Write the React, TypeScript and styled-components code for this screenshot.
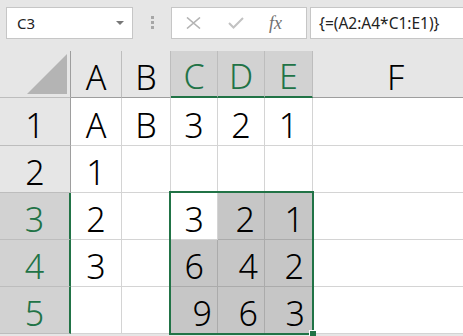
import React from 'react';
import styled, { createGlobalStyle } from 'styled-components';

const GREEN = '#217346';

const GlobalStyle = createGlobalStyle`
  html, body {
    margin: 0;
    padding: 0;
    background: #e6e6e6;
    overflow: hidden;
  }
`;

const Page = styled.div`
  width: 463px;
  height: 336px;
  overflow: hidden;
  background: #e6e6e6;
  font-family: 'Noto Sans', 'Liberation Sans', sans-serif;
`;

const FormulaBar = styled.div`
  display: flex;
  align-items: flex-start;
  height: 51px;
  box-sizing: border-box;
  padding: 7px 0 0 6px;
`;

const NameBox = styled.div`
  width: 127px;
  height: 32px;
  box-sizing: border-box;
  background: #fff;
  border: 1px solid #c6c6c6;
  display: flex;
  align-items: center;
  padding-left: 10px;
  font-size: 15px;
  color: #222;
`;

const Caret = styled.span`
  margin-left: auto;
  margin-right: 8px;
  width: 0;
  height: 0;
  border-left: 4px solid transparent;
  border-right: 4px solid transparent;
  border-top: 4px solid #777;
`;

const Grip = styled.div`
  display: flex;
  flex-direction: column;
  gap: 2px;
  margin: 9px 17px 0 18px;
  span {
    width: 3px;
    height: 3px;
    background: #a6a6a6;
  }
`;

const ButtonBox = styled.div`
  width: 136px;
  height: 32px;
  box-sizing: border-box;
  background: #fff;
  border: 1px solid #c6c6c6;
  display: flex;
  align-items: center;
  padding-left: 14px;
  gap: 27px;
`;

const Fx = styled.span`
  font-family: 'Liberation Serif', serif;
  font-style: italic;
  font-size: 18px;
  color: #707070;
  margin-left: -2px;
`;

const FormulaInput = styled.div`
  flex: 1;
  height: 32px;
  margin-left: 3px;
  box-sizing: border-box;
  background: #fff;
  border: 1px solid #c6c6c6;
  border-right: none;
  display: flex;
  align-items: center;
  padding-left: 8px;
  font-size: 15.5px;
  color: #222;
  white-space: nowrap;
`;

const Sheet = styled.div`
  position: relative;
  display: grid;
  grid-template-columns: 71px 51px 49px 47px 47px 48px 166px;
  grid-template-rows: 47px 48px 47px 47px 47px 47px;
  font-size: 34px;
  font-weight: 300;
  background: #fff;
`;

const Corner = styled.div`
  background: #e6e6e6;
  border-right: 1px solid #9e9e9e;
  border-bottom: 1px solid #bdbdbd;
  display: flex;
  align-items: flex-end;
  justify-content: flex-end;
  padding: 0 3px 3px 0;
`;

const ColHead = styled.div<{ $active?: boolean }>`
  background: ${(p) => (p.$active ? '#d2d2d2' : '#e6e6e6')};
  color: ${(p) => (p.$active ? GREEN : '#000')};
  border-right: 1px solid #bdbdbd;
  border-bottom: ${(p) => (p.$active ? `2px solid ${GREEN}` : '1px solid #9e9e9e')};
  display: flex;
  align-items: center;
  justify-content: center;
  padding-top: 5px;
  box-sizing: border-box;
`;

const RowHead = styled.div<{ $active?: boolean }>`
  background: ${(p) => (p.$active ? '#d2d2d2' : '#e6e6e6')};
  color: ${(p) => (p.$active ? GREEN : '#000')};
  border-right: ${(p) => (p.$active ? `2px solid ${GREEN}` : '1px solid #9e9e9e')};
  border-bottom: 1px solid #bdbdbd;
  display: flex;
  align-items: center;
  justify-content: center;
  padding-top: 6px;
  box-sizing: border-box;
`;

const Cell = styled.div<{ $shade?: boolean; $pad?: number }>`
  background: ${(p) => (p.$shade ? '#c6c6c6' : '#fff')};
  border-right: 1px solid ${(p) => (p.$shade ? '#ababab' : '#d4d4d4')};
  border-bottom: 1px solid ${(p) => (p.$shade ? '#ababab' : '#d4d4d4')};
  display: flex;
  align-items: center;
  justify-content: ${(p) => (p.$pad === undefined ? 'center' : 'flex-end')};
  padding-right: ${(p) => p.$pad ?? 0}px;
  padding-top: 6px;
  box-sizing: border-box;
  color: #000;
`;

// overlay spanning C3:E5; absolute so it doesn't take part in auto-placement
const Selection = styled.div`
  grid-column: 4 / 7;
  grid-row: 4 / 7;
  position: absolute;
  inset: -2px -1px -1px -2px;
  border: 2px solid ${GREEN};
  pointer-events: none;
`;

const FillHandle = styled.span`
  position: absolute;
  right: -4px;
  bottom: -4px;
  width: 6px;
  height: 6px;
  background: ${GREEN};
  border-left: 1px solid #fff;
  border-top: 1px solid #fff;
`;

type CellData = { v: string; shade?: boolean; pad?: number };

const cols = ['A', 'B', 'C', 'D', 'E', 'F'];

const rows: CellData[][] = [
  [{ v: 'A' }, { v: 'B' }, { v: '3' }, { v: '2' }, { v: '1' }, { v: '' }],
  [{ v: '1' }, { v: '' }, { v: '' }, { v: '' }, { v: '' }, { v: '' }],
  [{ v: '2' }, { v: '' }, { v: '3', pad: 13 }, { v: '2', shade: true, pad: 9 }, { v: '1', shade: true, pad: 8 }, { v: '' }],
  [{ v: '3' }, { v: '' }, { v: '6', shade: true, pad: 13 }, { v: '4', shade: true, pad: 6 }, { v: '2', shade: true, pad: 8 }, { v: '' }],
  [{ v: '' }, { v: '' }, { v: '9', shade: true, pad: 5 }, { v: '6', shade: true, pad: 6 }, { v: '3', shade: true, pad: 7 }, { v: '' }],
];

const App: React.FC = () => (
  <>
    <GlobalStyle />
    <Page>
      <FormulaBar>
        <NameBox>
          C3
          <Caret />
        </NameBox>
        <Grip>
          <span />
          <span />
          <span />
        </Grip>
        <ButtonBox>
          <svg width="15" height="12" viewBox="0 0 15 12">
            <path d="M1 0.5 L14 11.5 M14 0.5 L1 11.5" stroke="#b3b3b3" strokeWidth="1.6" fill="none" />
          </svg>
          <svg width="16" height="12" viewBox="0 0 16 12">
            <path d="M1 6 L5.5 10.5 L15 1" stroke="#c2c2c2" strokeWidth="2" fill="none" />
          </svg>
          <Fx>fx</Fx>
        </ButtonBox>
        <FormulaInput>{'{=(A2:A4*C1:E1)}'}</FormulaInput>
      </FormulaBar>
      <Sheet>
        <Corner>
          <svg width="40" height="40" viewBox="0 0 40 40">
            <polygon points="40,0 40,40 0,40" fill="#b4b4b4" />
          </svg>
        </Corner>
        {cols.map((c, i) => (
          <ColHead key={c} $active={i >= 2 && i <= 4}>
            {c}
          </ColHead>
        ))}
        {rows.map((r, ri) => (
          <React.Fragment key={ri}>
            <RowHead $active={ri >= 2}>{ri + 1}</RowHead>
            {r.map((cell, ci) => (
              <Cell key={ci} $shade={cell.shade} $pad={cell.pad}>
                {cell.v}
              </Cell>
            ))}
          </React.Fragment>
        ))}
        <Selection>
          <FillHandle />
        </Selection>
      </Sheet>
    </Page>
  </>
);

export default App;
